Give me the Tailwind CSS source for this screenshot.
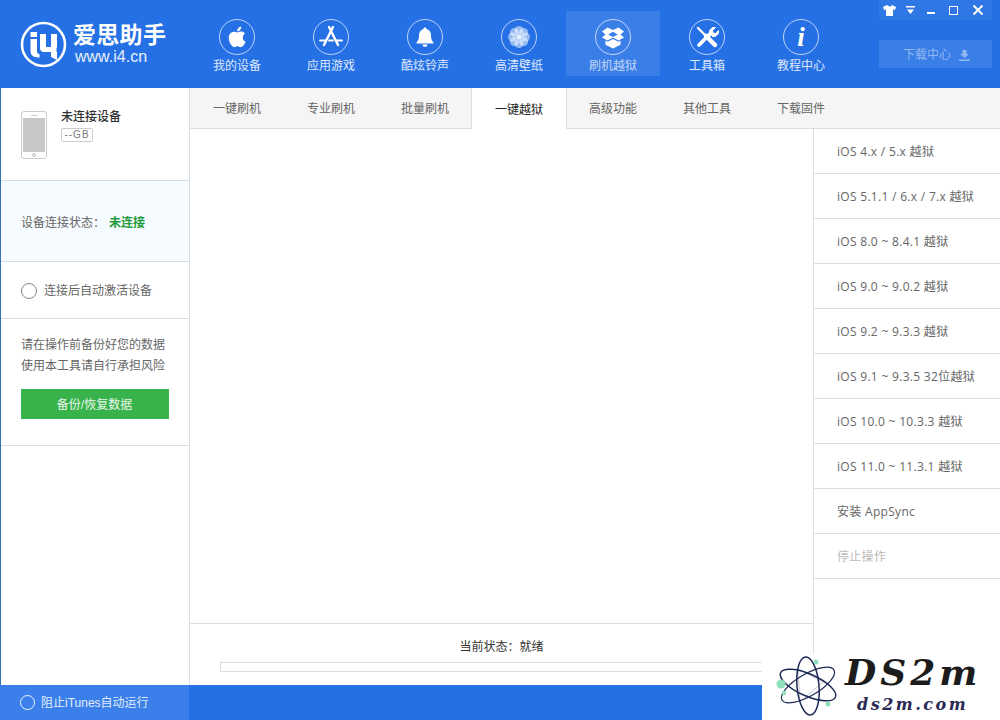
<!DOCTYPE html>
<html lang="zh-CN">
<head>
    <meta charset="UTF-8">
    <title>爱思助手 - 一键越狱</title>
    <script src="https://cdn.jsdelivr.net/npm/@tailwindcss/browser@4"></script>
</head>
<body class="bg-white">
    <div class="relative w-[1000px] h-[720px] overflow-hidden flex flex-col font-['Liberation_Sans','Noto_Sans_CJK_SC',sans-serif] text-xs text-[#666]">

        <!-- 顶部导航 -->
        <header class="relative h-[88px] shrink-0 bg-[#2470e4] flex">
            <div class="w-[190px] shrink-0 flex items-center pl-[20px] gap-[6px] text-white">
                <svg class="w-[47px] h-[47px] shrink-0" viewBox="0 0 47 47" fill="none">
                    <circle cx="23.5" cy="23.5" r="21.5" stroke="#fff" stroke-width="2.6"/>
                    <rect x="10.500" y="11" width="6.500" height="5" fill="#fff"/>
                    <path d="M10.500 18h6.500v12.500c0 1.500.8 2.500 2.500 2.500v3.500c-6 0-9-2-9-6.500z" fill="#fff"/>
                    <path d="M20 13h6v13h5V13h6v13.500h-.5V31H37v8l-6-3v-5h-7c-2.500 0-4-1.500-4-4z" fill="#fff"/>
                </svg>
                <div class="flex flex-col mt-[-1px]">
                    <span class="text-[23px] leading-[26px] font-bold tracking-[0.3px]">爱思助手</span>
                    <span class="text-[16px] leading-[17px] pl-[2px] text-white/90">www.i4.cn</span>
                </div>
            </div>
            <nav class="flex text-white/85">
                <div class="w-[94px] flex flex-col items-center pt-[19px]">
                    <div class="w-[36px] h-[36px] rounded-full border border-white/70 flex items-center justify-center">
                        <svg class="w-[25px] h-[25px]" viewBox="0 0 24 24" fill="#fff"><path d="M17.050 12.040c-.03-2.500 2.040-3.700 2.130-3.760-1.160-1.700-2.970-1.930-3.610-1.960-1.540-.16-3 .9-3.780.9-.78 0-1.980-.88-3.260-.86-1.680.03-3.230.98-4.090 2.480-1.740 3.030-.45 7.500 1.250 9.950.83 1.200 1.820 2.550 3.120 2.500 1.250-.05 1.720-.81 3.240-.81 1.510 0 1.940.81 3.260.78 1.350-.02 2.200-1.220 3.020-2.430.95-1.390 1.340-2.740 1.360-2.810-.03-.01-2.610-1-2.640-3.980zM14.560 4.700c.69-.84 1.160-2 1.030-3.160-1 .04-2.200.66-2.920 1.500-.64.74-1.200 1.930-1.050 3.060 1.110.09 2.250-.57 2.940-1.400z"/></svg>
                    </div>
                    <span class="mt-[2px] leading-[18px]">我的设备</span>
                </div>
                <div class="w-[94px] flex flex-col items-center pt-[19px]">
                    <div class="w-[36px] h-[36px] rounded-full border border-white/70 flex items-center justify-center">
                        <svg class="w-[28px] h-[28px]" viewBox="0 0 28 28" fill="none" stroke="#fff" stroke-linecap="round"><path d="M16 4 7 22" stroke-width="2.400"/><path d="M12 4 21 22" stroke-width="2.400"/><path d="M3 17.500h6M12 17.500h4M19 17.500h6" stroke-width="1.800"/></svg>
                    </div>
                    <span class="mt-[2px] leading-[18px]">应用游戏</span>
                </div>
                <div class="w-[94px] flex flex-col items-center pt-[19px]">
                    <div class="w-[36px] h-[36px] rounded-full border border-white/70 flex items-center justify-center">
                        <svg class="w-[22px] h-[22px]" viewBox="0 0 22 22" fill="#fff"><path d="M11 1.500c1 0 1.600.7 1.600 1.600 3 .8 4.400 3.200 4.400 6.400 0 3.500 1 5.200 2.500 7v1H2.500v-1c1.500-1.800 2.500-3.500 2.500-7 0-3.200 1.400-5.600 4.400-6.400 0-.9.600-1.600 1.600-1.600z"/><path d="M8.500 18.500h5c0 1.400-1.100 2.300-2.500 2.300s-2.500-.9-2.500-2.300z"/></svg>
                    </div>
                    <span class="mt-[2px] leading-[18px]">酷炫铃声</span>
                </div>
                <div class="w-[94px] flex flex-col items-center pt-[19px]">
                    <div class="w-[36px] h-[36px] rounded-full border border-white/70 flex items-center justify-center">
                        <svg class="w-[26px] h-[26px]" viewBox="0 0 26 26" fill="#fff" fill-opacity="0.5">
                            <circle cx="13" cy="6.500" r="4.500"/><circle cx="17.600" cy="8.400" r="4.500"/><circle cx="19.500" cy="13" r="4.500"/><circle cx="17.600" cy="17.600" r="4.500"/>
                            <circle cx="13" cy="19.500" r="4.500"/><circle cx="8.400" cy="17.600" r="4.500"/><circle cx="6.500" cy="13" r="4.500"/><circle cx="8.400" cy="8.400" r="4.500"/>
                            <circle cx="13" cy="13" r="2.500" fill-opacity="0.9"/>
                        </svg>
                    </div>
                    <span class="mt-[2px] leading-[18px]">高清壁纸</span>
                </div>
                <div class="relative w-[94px] flex flex-col items-center pt-[19px] text-white/70">
                    <div class="absolute left-0 right-0 top-[11px] h-[65px] bg-white/10"></div>
                    <div class="relative w-[36px] h-[36px] rounded-full border border-white/70 flex items-center justify-center">
                        <svg class="w-[26px] h-[26px]" viewBox="0 0 26 26" fill="#fff"><path d="M7.500 3.500 13 6l5.500-2.500L24 7.500l-3.500 3 3.500 3-5.500 3L13 13.500l-5.500 3-5.500-3 3.500-3L2 7.500zM13 7.800 8.200 10.500 13 13l4.800-2.500z"/><path d="M5.500 16.500l2 1.200L13 15l5.500 2.700 2-1.200v4.200L13 24.500l-7.500-3.800z"/></svg>
                    </div>
                    <span class="relative mt-[2px] leading-[18px]">刷机越狱</span>
                </div>
                <div class="w-[94px] flex flex-col items-center pt-[19px]">
                    <div class="w-[36px] h-[36px] rounded-full border border-white/70 flex items-center justify-center">
                        <svg class="w-[26px] h-[26px]" viewBox="0 0 26 26" fill="none" stroke="#fff" stroke-linecap="round">
                            <path d="M4 4 12 12" stroke-width="2.400"/>
                            <path d="M12 12 21 21" stroke-width="4.500"/>
                            <path d="M5 21 16 10" stroke-width="3.800"/>
                            <path d="M15.500 9.500a5 5 0 0 1 6-6l-3 3 .5 2.500 2.500.5 3-3a5 5 0 0 1-6 6z" fill="#fff" stroke-width="1"/>
                        </svg>
                    </div>
                    <span class="mt-[2px] leading-[18px]">工具箱</span>
                </div>
                <div class="w-[94px] flex flex-col items-center pt-[19px]">
                    <div class="w-[36px] h-[36px] rounded-full border border-white/70 flex items-center justify-center">
                        <span class="font-['Liberation_Serif',serif] italic font-bold text-[27px] leading-none text-white">i</span>
                    </div>
                    <span class="mt-[2px] leading-[18px]">教程中心</span>
                </div>
            </nav>
            <!-- 窗口按钮 -->
            <div class="absolute right-[8px] top-0 w-[113px] h-[20px] bg-white/5 flex items-center">
                <div class="w-[21px] flex justify-center">
                    <svg class="w-[13px] h-[11px]" viewBox="0 0 13 11" fill="#fff"><path d="M4 0 0 2l1 3 2-.5V11h7V4.500l2 .5 1-3-4-2-1.500 1.500h-1z"/></svg>
                </div>
                <div class="w-[20px] flex justify-center">
                    <svg class="w-[9px] h-[8px]" viewBox="0 0 9 8" fill="#fff"><path d="M0 0h9v1.500H0zM1 3.500h7L4.500 8z"/></svg>
                </div>
                <div class="w-[22px] flex justify-center">
                    <span class="w-[8px] h-[2px] mt-[5px] bg-white"></span>
                </div>
                <div class="w-[22px] flex justify-center">
                    <span class="w-[9px] h-[9px] border border-white"></span>
                </div>
                <div class="w-[28px] flex justify-center">
                    <svg class="w-[10px] h-[10px]" viewBox="0 0 10 10" stroke="#fff" stroke-width="2"><path d="M.5.5l9 9M9.500.5l-9 9"/></svg>
                </div>
            </div>
            <div class="absolute right-[8px] top-[40px] w-[113px] h-[28px] pt-[2px] pl-[2px] bg-white/10 flex items-center justify-center gap-[8px] text-white/45">
                <span>下载中心</span>
                <svg class="w-[11px] h-[11px]" viewBox="0 0 11 11" fill="currentColor"><path d="M3.500 0h4v4H10L5.500 8 1 4h2.500zM0 9.500h11V11H0z"/></svg>
            </div>
        </header>

        <div class="flex flex-1 min-h-0 border-l border-[#3a72b8]">
            <!-- 左侧栏 -->
            <aside class="w-[189px] shrink-0 border-r border-[#d8dde3] flex flex-col">
                <div class="h-[93px] shrink-0 border-b border-[#d8dde3] flex pl-[20px] pt-[23px] gap-[14px]">
                    <div class="w-[26px] h-[48px] rounded-[3px] border border-[#ccc] flex flex-col items-center">
                        <span class="w-[7px] h-px mt-[3px] bg-[#ccc]"></span>
                        <span class="w-[22px] h-[34px] mt-[2px] bg-[#c8c8c8]"></span>
                        <span class="w-[4px] h-[4px] mt-[1px] rounded-full border border-[#bbb]"></span>
                    </div>
                    <div class="flex flex-col items-start">
                        <span class="leading-[16px] mt-[-2px] font-medium text-[#333]">未连接设备</span>
                        <span class="mt-[3px] w-[32px] h-[14px] border border-[#ccc] rounded-[2px] text-[10px] leading-[12px] tracking-[1px] text-center text-[#777]">--GB</span>
                    </div>
                </div>
                <div class="h-[81px] shrink-0 border-b border-[#d8dde3] bg-[#f5fbfe] pt-[4px] flex items-center pl-[20px]">
                    <span>设备连接状态：</span>
                    <span class="ml-[4px] font-bold text-[#1f9a3c]">未连接</span>
                </div>
                <div class="h-[57px] shrink-0 border-b border-[#d8dde3] pt-[2px] flex items-center pl-[20px] gap-[7px]">
                    <span class="w-[16px] h-[16px] rounded-full border border-[#888]"></span>
                    <span>连接后自动激活设备</span>
                </div>
                <div class="h-[127px] shrink-0 border-b border-[#d8dde3] pl-[20px] pt-[16px]">
                    <p class="leading-[21px]">请在操作前备份好您的数据</p>
                    <p class="leading-[21px]">使用本工具请自行承担风险</p>
                    <div class="mt-[12px] w-[148px] h-[30px] pt-[2px] pr-[1px] bg-[#38b24a] text-white/90 flex items-center justify-center">备份/恢复数据</div>
                </div>
            </aside>

            <!-- 主内容 -->
            <main class="flex-1 min-w-0 flex flex-col">
                <div class="h-[41px] shrink-0 bg-[#f5f5f5] border-b border-[#ddd] flex">
                    <div class="w-[94px] h-[40px] pt-[2px] flex items-center justify-center">一键刷机</div>
                    <div class="w-[94px] h-[40px] pt-[2px] flex items-center justify-center">专业刷机</div>
                    <div class="w-[94px] h-[40px] pt-[2px] flex items-center justify-center">批量刷机</div>
                    <div class="w-[96px] h-[41px] -ml-px -mr-px pt-[2px] bg-white border-x border-[#ddd] text-[#222] flex items-center justify-center">一键越狱</div>
                    <div class="w-[94px] h-[40px] pt-[2px] flex items-center justify-center">高级功能</div>
                    <div class="w-[94px] h-[40px] pt-[2px] flex items-center justify-center">其他工具</div>
                    <div class="w-[94px] h-[40px] pt-[2px] flex items-center justify-center">下载固件</div>
                </div>
                <div class="flex-1 min-h-0 flex">
                    <div class="w-[623px] shrink-0 flex flex-col">
                        <div class="flex-1"></div>
                        <div class="h-[62px] shrink-0 border-t border-[#ddd] flex flex-col items-center">
                            <span class="mt-[14px] leading-[18px] text-[#333]">当前状态：就绪</span>
                            <div class="self-start ml-[30px] mt-[6px] w-[600px] h-[10px] border border-[#ddd]"></div>
                        </div>
                    </div>
                    <div class="flex-1 border-l border-[#ddd] flex flex-col tracking-[0.3px] font-['Open_Sans','Noto_Sans_CJK_SC',sans-serif]">
                        <div class="h-[45px] shrink-0 border-b border-[#ddd] pt-[2px] flex items-center pl-[23px]">iOS 4.x / 5.x 越狱</div>
                        <div class="h-[45px] shrink-0 border-b border-[#ddd] pt-[2px] flex items-center pl-[23px]">iOS 5.1.1 / 6.x / 7.x 越狱</div>
                        <div class="h-[45px] shrink-0 border-b border-[#ddd] pt-[2px] flex items-center pl-[23px]">iOS 8.0 ~ 8.4.1 越狱</div>
                        <div class="h-[45px] shrink-0 border-b border-[#ddd] pt-[2px] flex items-center pl-[23px]">iOS 9.0 ~ 9.0.2 越狱</div>
                        <div class="h-[45px] shrink-0 border-b border-[#ddd] pt-[2px] flex items-center pl-[23px]">iOS 9.2 ~ 9.3.3 越狱</div>
                        <div class="h-[45px] shrink-0 border-b border-[#ddd] pt-[2px] flex items-center pl-[23px]">iOS 9.1 ~ 9.3.5 32位越狱</div>
                        <div class="h-[45px] shrink-0 border-b border-[#ddd] pt-[2px] flex items-center pl-[23px]">iOS 10.0 ~ 10.3.3 越狱</div>
                        <div class="h-[45px] shrink-0 border-b border-[#ddd] pt-[2px] flex items-center pl-[23px]">iOS 11.0 ~ 11.3.1 越狱</div>
                        <div class="h-[45px] shrink-0 border-b border-[#ddd] pt-[2px] flex items-center pl-[23px]">安装 AppSync</div>
                        <div class="h-[45px] shrink-0 border-b border-[#ddd] pt-[2px] flex items-center pl-[23px] text-[#bbb]">停止操作</div>
                    </div>
                </div>
            </main>
        </div>

        <!-- 底部状态栏 -->
        <footer class="h-[35px] shrink-0 bg-[#2470e4] flex">
            <div class="w-[189px] bg-[#3b80ea] flex items-center pl-[20px] gap-[6px] text-white/85">
                <span class="w-[15px] h-[15px] rounded-full border border-white/90"></span>
                <span>阻止iTunes自动运行</span>
            </div>
        </footer>

        <!-- 水印 -->
        <div class="absolute left-[762px] top-[654px] w-[238px] h-[66px] bg-white">
            <svg class="absolute left-[14px] top-[1px] w-[66px] h-[64px]" viewBox="0 0 66 64" fill="none">
                <path d="M22 14 47 27 24 47z" stroke="#c9c6d0" stroke-width="1"/>
                <ellipse cx="32" cy="30" rx="30" ry="11" transform="rotate(24 32 30)" stroke="#1d2a55" stroke-width="1.500"/>
                <ellipse cx="32" cy="30" rx="30" ry="11" transform="rotate(-30 32 30)" stroke="#1d2a55" stroke-width="1.200"/>
                <ellipse cx="32" cy="31" rx="29" ry="11" transform="rotate(85 32 31)" stroke="#1d2a55" stroke-width="1.500"/>
                <circle cx="5" cy="29" r="4.500" fill="#8fe0b8"/>
                <circle cx="40" cy="7" r="2.500" fill="#8fe0b8"/>
                <circle cx="8" cy="38" r="2.200" fill="#8fe0b8"/>
                <circle cx="52" cy="49" r="2.500" fill="#8fe0b8"/>
            </svg>
            <span class="absolute left-[83px] top-[1px] font-['DejaVu_Serif',serif] italic font-bold text-[36px] leading-[34px] tracking-[4px] text-[#1c1c1c] whitespace-nowrap">DS2m</span>
            <span class="absolute left-[95px] top-[40px] font-['DejaVu_Serif',serif] italic font-bold text-[16px] leading-[22px] tracking-[2.500px] text-[#2a2a55] whitespace-nowrap">ds2m.com</span>
        </div>
    </div>
</body>
</html>
